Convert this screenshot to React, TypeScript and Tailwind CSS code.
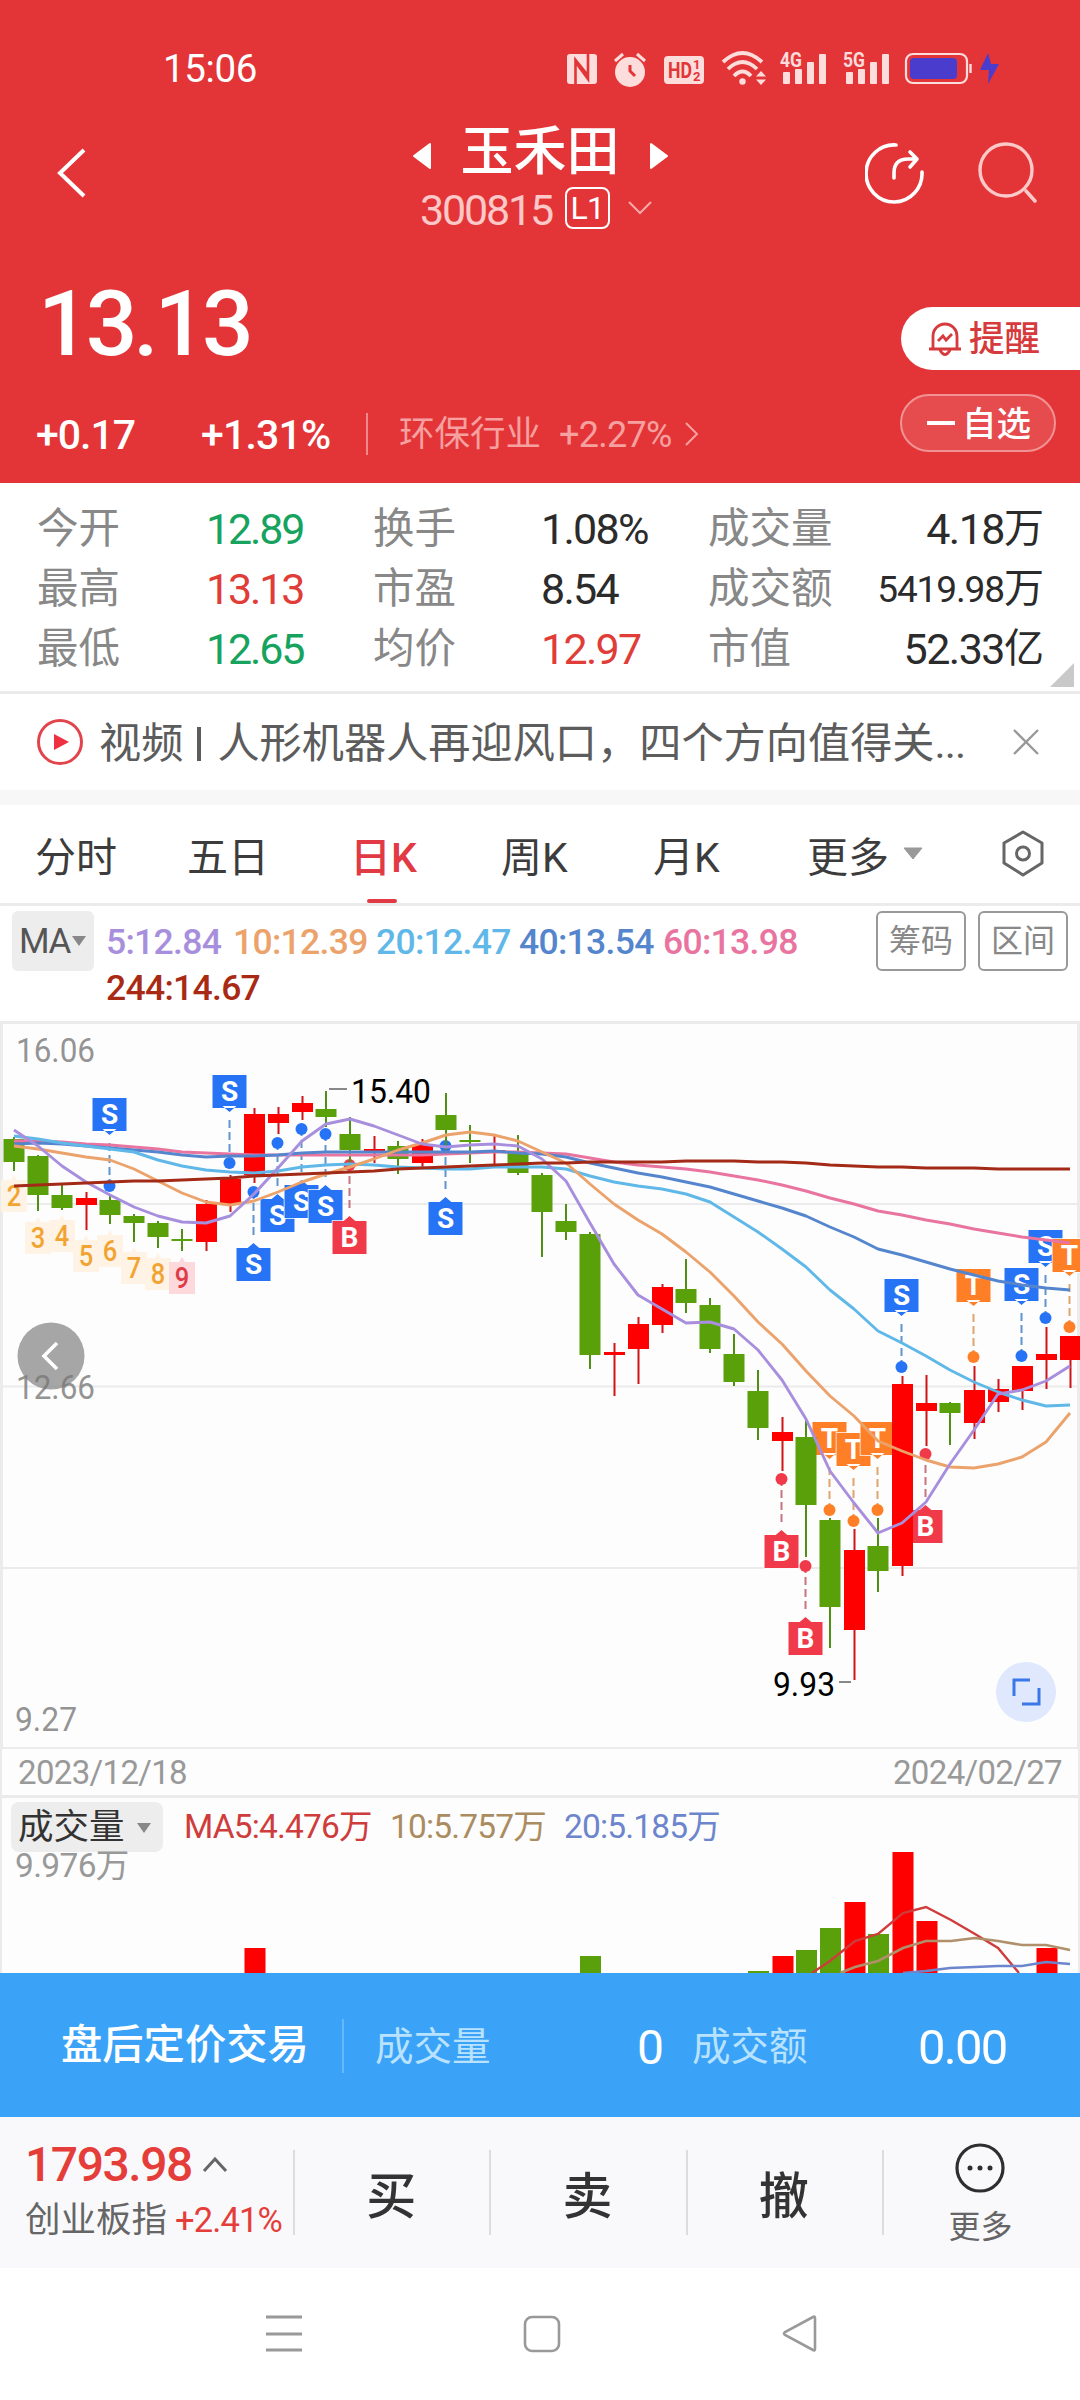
import type { ReactNode } from "react"

type Candle = [up: number, top: number, bottom: number, high: number, low: number]
type Marker = { i: number; kind: "S" | "B" | "T"; dot: number; below?: boolean }

const STEP = 24
const colX = (i: number) => 14 + i * STEP

// up/down, body top, body bottom, wick top, wick bottom
const candles: Candle[] = [
  [0, 119, 142, 117, 151], [0, 136, 175, 135, 191], [0, 175, 188, 163, 190], [1, 178, 185, 172, 210],
  [0, 180, 195, 175, 204], [0, 196, 203, 194, 222], [0, 203, 217, 201, 228], [0, 219, 221, 209, 231],
  [1, 184, 222, 180, 231], [1, 159, 184, 155, 192], [1, 94, 155, 88, 163], [1, 94, 103, 87, 114],
  [1, 83, 92, 76, 100], [0, 89, 97, 71, 107], [0, 114, 130, 97, 143], [1, 129, 131, 116, 143],
  [0, 126, 139, 121, 154], [1, 125, 143, 119, 147], [0, 95, 110, 73, 130], [0, 120, 122, 105, 143],
  [1, 130, 132, 114, 145], [0, 133, 153, 115, 155], [0, 155, 192, 153, 237], [0, 201, 212, 184, 220],
  [0, 214, 335, 212, 349], [1, 332, 335, 323, 376], [1, 304, 329, 297, 364], [1, 267, 305, 264, 313],
  [0, 269, 283, 239, 293], [0, 285, 329, 278, 333], [0, 334, 362, 314, 366], [0, 371, 408, 350, 420],
  [1, 412, 421, 397, 451], [0, 417, 485, 400, 537], [0, 500, 587, 498, 628], [1, 530, 610, 509, 660],
  [0, 526, 551, 498, 572], [1, 364, 546, 356, 556], [1, 383, 391, 355, 426], [0, 383, 393, 382, 425],
  [1, 370, 403, 346, 419], [1, 369, 382, 359, 392], [1, 346, 371, 346, 390], [1, 334, 340, 307, 369],
  [1, 316, 340, 316, 368],
]

const averages = [
  {
    color: "#e8749f",
    data: [121, 121, 122, 124, 125, 127, 129, 132, 133, 134, 135, 135, 135, 135, 135, 135, 135, 135, 134, 133, 132, 132, 133, 134, 138, 142, 145, 147, 149, 152, 156, 160, 165, 171, 178, 184, 191, 195, 200, 204, 209, 213, 217, 220, 223],
  },
  {
    color: "#5585cd",
    data: [124, 123, 124, 126, 128, 130, 132, 135, 137, 136, 136, 135, 133, 132, 132, 132, 132, 132, 132, 132, 131, 133, 134, 137, 143, 148, 153, 157, 162, 167, 174, 181, 188, 196, 207, 217, 229, 235, 242, 249, 255, 261, 265, 268, 270],
  },
  {
    color: "#5fb8e8",
    data: [116, 119, 123, 126, 129, 132, 140, 146, 150, 152, 153, 151, 147, 145, 144, 145, 147, 148, 149, 149, 147, 147, 147, 149, 156, 162, 166, 169, 174, 182, 197, 212, 229, 247, 270, 289, 311, 323, 336, 350, 362, 372, 380, 386, 385],
  },
  {
    color: "#eba26b",
    data: [126, 129, 133, 137, 140, 149, 161, 173, 182, 185, 181, 172, 162, 154, 147, 139, 130, 123, 115, 112, 115, 121, 132, 143, 164, 184, 200, 214, 232, 252, 276, 302, 324, 351, 376, 396, 421, 431, 440, 447, 448, 444, 437, 422, 393],
  },
  {
    color: "#a88fdd",
    data: [110, 126, 146, 162, 175, 187, 196, 202, 203, 196, 174, 148, 121, 104, 99, 106, 115, 124, 127, 125, 124, 126, 139, 161, 203, 244, 275, 289, 303, 302, 309, 330, 360, 399, 451, 483, 513, 503, 482, 444, 410, 374, 370, 361, 346],
  },
  {
    color: "#a32a16",
    data: [166, 165, 164, 163, 162, 161, 161, 160, 159, 158, 156, 155, 154, 153, 152, 151, 149, 148, 147, 146, 145, 144, 143, 143, 142, 142, 142, 142, 141, 141, 141, 142, 142, 143, 145, 146, 147, 147, 148, 148, 148, 149, 149, 149, 149],
  },
]

const markers: Marker[] = [
  { i: 4, kind: "S", dot: 166 },
  { i: 9, kind: "S", dot: 143 },
  { i: 10, kind: "S", dot: 172, below: true },
  { i: 11, kind: "S", dot: 123, below: true },
  { i: 12, kind: "S", dot: 109, below: true },
  { i: 13, kind: "S", dot: 114, below: true },
  { i: 14, kind: "B", dot: 145, below: true },
  { i: 18, kind: "S", dot: 126, below: true },
  { i: 32, kind: "B", dot: 459, below: true },
  { i: 33, kind: "B", dot: 546, below: true },
  { i: 34, kind: "T", dot: 490 },
  { i: 35, kind: "T", dot: 501 },
  { i: 36, kind: "T", dot: 490 },
  { i: 37, kind: "S", dot: 347 },
  { i: 38, kind: "B", dot: 434, below: true },
  { i: 40, kind: "T", dot: 337 },
  { i: 42, kind: "S", dot: 336 },
  { i: 43, kind: "S", dot: 298 },
  { i: 44, kind: "T", dot: 307 },
]

const markerColor = { S: "#2674f5", B: "#f03a4a", T: "#ff7f27" }
const stemColor = { S: "#5f95cf", B: "#c77580", T: "#dfa46f" }

// TD sequence count under each candle
const counts = [160, 202, 200, 220, 215, 232, 238, 242]

const volumes = [
  [10, 1, 151], [24, 0, 159], [31, 0, 174], [32, 1, 159], [33, 0, 153], [34, 0, 131],
  [35, 1, 105], [36, 0, 137], [37, 1, 55], [38, 1, 124], [43, 1, 151],
]

const stats = [
  [["今开", "12.89", "text-[#15a35e]"], ["换手", "1.08%", "text-[#2b2b2b]"], ["成交量", "4.18", "万"]],
  [["最高", "13.13", "text-[#e03c38]"], ["市盈", "8.54", "text-[#2b2b2b]"], ["成交额", "5419.98", "万"]],
  [["最低", "12.65", "text-[#15a35e]"], ["均价", "12.97", "text-[#e03c38]"], ["市值", "52.33", "亿"]],
]

function StatusIcons() {
  const pink = "#fddcdc"
  return (
    <svg width="440" height="44" viewBox="564 48 440 44" fill="none">
      <rect x="567" y="54" width="30" height="30" rx="3" fill={pink} />
      <path d="M575.500 84V60L588.500 76M588 54V79L575.500 62" stroke="#e33537" strokeWidth="2.600" />
      <circle cx="630" cy="72" r="15" fill={pink} />
      <path d="M615 61L623 54M645 61L637 54" stroke={pink} strokeWidth="3" />
      <path d="M630 65V71L635 76" stroke="#e33537" strokeWidth="3" />
      <rect x="664" y="56" width="40" height="28" rx="4" fill={pink} />
      <text x="668" y="78" fontSize="22" fontWeight="700" fill="#e33537" fontFamily="Roboto" textLength="24" lengthAdjust="spacingAndGlyphs">HD</text>
      <text x="693" y="69" fontSize="13" fontWeight="700" fill="#e33537" fontFamily="Roboto">1</text>
      <text x="693" y="81" fontSize="13" fontWeight="700" fill="#e33537" fontFamily="Roboto">2</text>
      <path d="M723 62Q742.500 44 762 62M728 69Q742.500 55 757 69M734 76Q742.500 67 751 76" stroke={pink} strokeWidth="3.800" />
      <circle cx="742.500" cy="81.500" r="3.200" fill={pink} />
      <path d="M761 71L766 76.500H756ZM761 85L756 79.500H766Z" fill={pink} />
      {[["4G", 783], ["5G", 846]].map(([label, x]) => (
        <g key={label} fill={pink}>
          <text x={Number(x) - 3} y="67" fontSize="21" fontWeight="700" fontFamily="Roboto" textLength="22" lengthAdjust="spacingAndGlyphs">{label}</text>
          <rect x={x} y="72" width="7" height="12" rx="1" />
          <rect x={Number(x) + 12} y="69" width="7" height="15" rx="1" />
          <rect x={Number(x) + 24} y="62" width="7" height="22" rx="1" />
          <rect x={Number(x) + 36} y="54" width="7" height="30" rx="1" />
        </g>
      ))}
      <rect x="906" y="54" width="61" height="29" rx="7" stroke={pink} strokeWidth="2.200" />
      <path d="M970.500 64V73" stroke={pink} strokeWidth="2.400" />
      <rect x="910" y="58" width="47" height="21" rx="4" fill="#4a3ccd" />
      <path d="M988 53L980 70H989L988 84L999 64H991Z" fill="#4a3ccd" />
    </svg>
  )
}

function Header() {
  return (
    <header className="h-[483px] bg-[#e33537] text-white">
      <div className="flex h-[92px] items-end">
        <span className="ml-[163px] w-[401px] text-[38.500px] leading-[46px] tracking-[-0.01em]">15:06</span>
        <StatusIcons />
      </div>

      <div className="flex h-[160px] pt-[28px]">
        <svg className="mt-[26px] ml-[56px]" width="32" height="54" fill="none">
          <path d="M28 4L4 27L28 50" stroke="white" strokeWidth="4" />
        </svg>
        <div className="ml-[312px] flex w-[280px] flex-col items-center">
          <div className="flex h-[60px] items-center">
            <svg width="20" height="28" className="mt-[12px]"><path d="M18 2V26L2 14Z" fill="white" stroke="white" strokeWidth="2" strokeLinejoin="round" /></svg>
            <span className="mx-[29px] pt-[4px] text-[53px] leading-[60px] font-medium">玉禾田</span>
            <svg width="20" height="28" className="mt-[12px]"><path d="M2 2V26L18 14Z" fill="white" stroke="white" strokeWidth="2" strokeLinejoin="round" /></svg>
          </div>
          <div className="flex h-[56px] w-full items-center pl-[20px]">
            <span className="w-[145px] pt-[4px] text-[43px] tracking-[-0.05em] text-[#fcc8c8]">300815</span>
            <span className="h-[42px] w-[45px] rounded-lg border-2 border-white text-center text-[32px] leading-[38px] tracking-[-0.02em]">L1</span>
            <svg className="ml-[17px]" width="26" height="16" fill="none"><path d="M2 2L13 13L24 2" stroke="#f7a9a9" strokeWidth="2" /></svg>
          </div>
        </div>
        <svg className="mt-[20px] ml-[185px]" width="62" height="66" fill="none">
          <path d="M32 6A28 28.500 0 1 0 58 33" stroke="white" strokeWidth="3.600" strokeLinecap="round" transform="translate(-1 -1)" />
          <path d="M29 38V33Q29 19 43 19H51M45 12L52 19L45 27" stroke="white" strokeWidth="3.600" strokeLinecap="round" strokeLinejoin="round" />
        </svg>
        <svg className="mt-[20px] ml-[50px]" width="64" height="66" fill="none">
          <circle cx="29" cy="30" r="26" stroke="#fcc8c8" strokeWidth="3.400" />
          <path d="M49 51L58 61" stroke="#fcc8c8" strokeWidth="3.600" strokeLinecap="round" />
        </svg>
      </div>

      <div className="flex h-[142px] justify-between">
        <span className="mt-[18px] ml-[38px] text-[91px] leading-[108px] font-medium tracking-[-0.045em]">13.13</span>
        <div className="mt-[55px] flex h-[63px] w-[179px] items-center rounded-l-full bg-white pl-[27px] text-[#d63a3c]">
          <svg width="34" height="36" fill="none" stroke="#d63a3c" strokeWidth="2.800">
            <path d="M5 28V15A12 12 0 0 1 29 15V28M1 28H33M12 29Q17 38 22 29" />
            <path d="M10 20L15 15L18 19L24 13" />
          </svg>
          <span className="ml-[7px] pt-[3px] text-[35.500px] font-medium">提醒</span>
        </div>
      </div>

      <div className="flex h-[58px]">
        <div className="flex h-[80px] items-center">
          <span className="ml-[36px] w-[165px] pt-[2px] text-[41px] font-medium tracking-[-0.025em]">+0.17</span>
          <span className="w-[165px] pt-[2px] text-[41px] font-medium tracking-[-0.02em]">+1.31%</span>
          <span className="h-[42px] w-[2px] bg-[#ef8a8b]" />
          <span className="ml-[31px] pt-[2px] text-[35.500px] text-[#f6a0a0]">环保行业</span>
          <span className="ml-[18px] w-[125px] pt-[2px] text-[36px] tracking-[-0.02em] text-[#f6a0a0]">+2.27%</span>
          <svg width="16" height="28" fill="none"><path d="M2 3L13 14L2 25" stroke="#f6a0a0" strokeWidth="2" /></svg>
        </div>
        <div className="mr-[24px] ml-auto flex h-[58px] w-[156px] items-center rounded-full border-2 border-[#f19394] bg-[#e64b4d] pl-[25px]">
          <span className="h-[4px] w-[28px] bg-white" />
          <span className="ml-[7px] pt-[3px] text-[34.500px] font-medium">自选</span>
        </div>
      </div>
    </header>
  )
}

function Stats() {
  return (
    <section className="relative h-[211px] border-b-[3px] border-[#ebebeb] pt-[16px]">
      {stats.map((row) => (
        <div key={row[0][0]} className="flex h-[60px] items-center pl-[37px] text-[41.500px] text-[#888]">
          <span className="w-[169px]">{row[0][0]}</span>
          <span className={`w-[167px] text-[43px] tracking-[-0.05em] ${row[0][2]}`}>{row[0][1]}</span>
          <span className="w-[168px]">{row[1][0]}</span>
          <span className={`w-[167px] text-[43px] tracking-[-0.04em] ${row[1][2]}`}>{row[1][1]}</span>
          <span className="w-[130px]">{row[2][0]}</span>
          <span className="flex w-[206px] items-center justify-end text-[#2b2b2b]">
            <span className={row[2][1].length > 6 ? "text-[37px] tracking-[-0.03em]" : "text-[43px] tracking-[-0.035em]"}>{row[2][1]}</span>
            <span className="text-[40px]">{row[2][2]}</span>
          </span>
        </div>
      ))}
      <svg className="absolute right-[6px] bottom-[4px]" width="24" height="24"><path d="M24 0V24H0Z" fill="#c9c9c9" /></svg>
    </section>
  )
}

function News() {
  return (
    <div className="flex h-[96px] items-center">
      <svg className="ml-[36px]" width="48" height="48" fill="none">
        <circle cx="24" cy="24" r="21.500" stroke="#e2444c" strokeWidth="3" />
        <path d="M18 16L33 24L18 32Z" fill="#ee3040" />
      </svg>
      <p className="ml-[15px] flex items-center pt-[4px] text-[42.200px] text-[#5c5c5c]">
        视频<span className="mr-[16px] ml-[14px] h-[34px] w-[4px] bg-[#5c5c5c]" />人形机器人再迎风口，四个方向值得关
        <span className="tracking-[-0.02em]">...</span>
      </p>
      <svg className="mr-[40px] ml-auto" width="28" height="28"><path d="M2 2L26 26M26 2L2 26" stroke="#999" strokeWidth="2.400" /></svg>
    </div>
  )
}

function Tab({ children, className }: { children: ReactNode; className: string }) {
  return <span className={`pt-[8px] text-[41px] ${className}`}>{children}</span>
}

function Tabs() {
  return (
    <nav className="flex h-[101px] items-center border-b-[3px] border-[#ebebeb] text-[#3c3c3c]">
      <Tab className="ml-[35px] w-[152px]">分时</Tab>
      <Tab className="w-[163px]">五日</Tab>
      <div className="relative flex h-full w-[151px] items-center text-[#e23a44]">
        <Tab className="font-medium">日K</Tab>
        <span className="absolute bottom-0 left-[17px] h-[4px] w-[30px] rounded-full bg-[#e23a44]" />
      </div>
      <Tab className="w-[152px]">周K</Tab>
      <Tab className="w-[154px]">月K</Tab>
      <Tab className="w-[95px]">更多</Tab>
      <svg width="22" height="14"><path d="M2 1H20L11 12Z" fill="#999" stroke="#999" strokeLinejoin="round" /></svg>
      <svg className="ml-[76px]" width="46" height="50" fill="none" stroke="#666" strokeWidth="3">
        <path d="M23 3L42 14V34L23 46L4 34V14Z" strokeLinejoin="round" />
        <circle cx="23" cy="24.500" r="6.500" />
      </svg>
    </nav>
  )
}

function Legend() {
  return (
    <div className="flex h-[115px] items-start pt-[5px] pl-[12px]">
      <div className="flex h-[60px] w-[82px] items-center rounded-md bg-[#ededed] pl-[7px] text-[35px] tracking-[-0.04em] text-[#555]">
        MA
        <svg className="ml-[2px]" width="14" height="10"><path d="M0 0H14L7 10Z" fill="#888" /></svg>
      </div>
      <div className="ml-[12px] w-[770px] pt-[8px] text-[35.500px] leading-[46px] font-medium tracking-[-0.02em]">
        <div className="flex">
          <span className="w-[127px] text-[#a88fdd]">5:12.84</span>
          <span className="w-[143px] text-[#eba26b]">10:12.39</span>
          <span className="w-[143px] text-[#5fb8e8]">20:12.47</span>
          <span className="w-[144px] text-[#5585cd]">40:13.54</span>
          <span className="text-[#e8749f]">60:13.98</span>
        </div>
        <div className="text-[#a92a14]">244:14.67</div>
      </div>
      <button className="h-[60px] w-[90px] rounded-md border-2 border-[#999] text-[32px] leading-[54px] text-[#888]">筹码</button>
      <button className="ml-[12px] h-[60px] w-[90px] rounded-md border-2 border-[#999] text-[32px] leading-[54px] text-[#888]">区间</button>
    </div>
  )
}

function Flag({ i, kind, dot, below }: Marker) {
  const x = colX(i) - 0.5
  const dir = below ? 1 : -1
  const top = below ? dot + 56 : dot - 88
  const tip = dot + dir * 51
  const base = dot + dir * 57
  return (
    <g>
      <path d={`M${x} ${tip - dir * 8}V${dot}`} stroke={stemColor[kind]} strokeWidth="2" strokeDasharray="8 4" />
      <circle cx={x} cy={dot} r="6" fill={markerColor[kind]} />
      <path
        d={`M${x - 17} ${top}h34v33h-34ZM${x - 7} ${base}L${x} ${tip}L${x + 7} ${base}Z`}
        fill={markerColor[kind]}
        stroke="white"
        strokeWidth="1.500"
        paintOrder="stroke"
      />
      <text x={x} y={top + 26} fontSize="28" fontWeight="700" fill="white" textAnchor="middle" fontFamily="Roboto">{kind}</text>
    </g>
  )
}

function PriceChart() {
  return (
    <svg className="block" width="1080" height="728" viewBox="0 1 1080 728" fill="none" fontFamily="Roboto">
      <rect x="1.500" y="2.500" width="1077" height="726" fill="#fdfdfd" stroke="#ebebeb" strokeWidth="3" />
      <path d="M0 184H1080M0 366.500H1080M0 548H1080" stroke="#ebebeb" strokeWidth="2" />

      {counts.map((y, i) => (
        <g key={i}>
          <path d={`M${colX(i) - 13} ${y}h10l3 -5l3 5h10v32h-26Z`} fill={i === 7 ? "#fdd9dc" : "#fff3e6"} />
          <text x={colX(i)} y={y + 26} fontSize="29" fontWeight="500" textAnchor="middle" fill={i === 7 ? "#df3b48" : "#f2a433"} textLength="14.500" lengthAdjust="spacingAndGlyphs">{i + 2}</text>
        </g>
      ))}
      {markers.map((m) => <Flag key={m.i} {...m} />)}

      {candles.map(([up, top, bottom, high, low], i) => (
        <g key={i} fill={up ? "#ff0000" : "#5aa00a"}>
          <rect x={colX(i) - 1 + up * 0.5} y={high} width="2" height={low - high} fill={up ? "#cf1417" : "#4e8f14"} />
          <rect x={colX(i) - 10.5 + up * 0.5} y={top} width="21" height={bottom - top} />
        </g>
      ))}

      {averages.map((ma) => (
        <polyline key={ma.color} points={ma.data.map((y, i) => `${colX(i)},${y}`).join(" ")} stroke={ma.color} strokeWidth="2.900" strokeLinejoin="round" />
      ))}

      <path d="M329 69H347M839 662H851" stroke="#888" strokeWidth="2" />
      <text x="351" y="83" fontSize="33" fill="#000" textLength="80" lengthAdjust="spacingAndGlyphs">15.40</text>
      <text x="773" y="676" fontSize="33" fill="#000" textLength="62" lengthAdjust="spacingAndGlyphs">9.93</text>

      <circle cx="51" cy="336" r="33.500" fill="#888" fillOpacity="0.750" />
      <path d="M57 323L44 336L57 349" stroke="white" strokeWidth="3.600" />
      <g fill="#777" fillOpacity="0.800" fontSize="33">
        <text x="16" y="42" textLength="79" lengthAdjust="spacingAndGlyphs">16.06</text>
        <text x="16" y="379" textLength="79" lengthAdjust="spacingAndGlyphs">12.66</text>
        <text x="15" y="711" textLength="62" lengthAdjust="spacingAndGlyphs">9.27</text>
      </g>

      <circle cx="1026" cy="672" r="30" fill="#dfe8fd" />
      <path d="M1014 676V660H1030M1022 684H1039V668" stroke="#3b78e7" strokeWidth="3" />
    </svg>
  )
}

function VolumePanel() {
  return (
    <section className="relative h-[175px] overflow-hidden border-x-2 border-[#ebebeb] bg-[#fdfdfd]">
      <svg className="absolute top-0 left-[-2px]" width="1080" height="175" fill="none">
        {volumes.map(([i, up, y]) => (
          <rect key={i} x={colX(i) - 10 + up * 0.5} y={y - 1} width="21" height={176 - y} fill={up ? "#ff0000" : "#5aa00a"} />
        ))}
        <polyline points="812,175 830,163 855,143 878,136 903,115 926,109 951,122 975,136 998,150 1019,175" stroke="#cf3c3c" strokeWidth="2.400" />
        <polyline points="840,175 855,169 878,163 903,150 926,143 951,143 975,140 998,143 1022,147 1046,147 1070,152" stroke="#b0906a" strokeWidth="2.600" />
        <polyline points="903,175 926,173 950,170 975,169 998,168 1022,168 1046,164 1070,166" stroke="#6d85cd" strokeWidth="2.600" />
      </svg>
      <div className="relative flex h-[54px] items-end pl-[9px]">
        <div className="flex h-[50px] w-[152px] items-center rounded-lg bg-[#ededed] pt-[2px] pl-[7px] text-[35.500px] text-[#333]">
          成交量
          <svg className="ml-[12px]" width="14" height="10"><path d="M0 0H14L7 10Z" fill="#888" /></svg>
        </div>
        <div className="flex h-[50px] items-center pl-[21px] text-[33.500px] tracking-[-0.025em]">
          <span className="w-[206px] text-[#cf3c3c]">MA5:4.476万</span>
          <span className="w-[174px] text-[#ab8c60]">10:5.757万</span>
          <span className="text-[#6d85cd]">20:5.185万</span>
        </div>
      </div>
      <div className="relative pt-[1px] pl-[13px] text-[33.500px] leading-[26px] tracking-[-0.02em] text-[#999]">9.976万</div>
    </section>
  )
}

function TradeBar() {
  return (
    <footer>
      <div className="flex h-[144px] items-center bg-[#3aa3f8] pt-[2px] text-[38.500px] text-[#b9e2ff]">
        <span className="ml-[61px] w-[281px] text-[41.300px] font-medium text-white">盘后定价交易</span>
        <span className="h-[54px] w-[2px] bg-[#65b8fa]" />
        <span className="ml-[31px] w-[262px] pt-[3px]">成交量</span>
        <span className="w-[55px] pt-[3px] text-[48px] text-white">0</span>
        <span className="w-[226px] pt-[3px]">成交额</span>
        <span className="pt-[3px] text-[49px] tracking-[-0.035em] text-white">0.00</span>
      </div>

      <div className="flex h-[151px] items-center bg-[#f9f9fc] text-[#333]">
        <div className="w-[293px] pt-[2px] pl-[25px] whitespace-nowrap">
          <div className="flex h-[54px] items-center text-[48px] font-medium tracking-[-0.03em] text-[#e53e3a]">
            1793.98
            <svg className="ml-[10px]" width="26" height="16" fill="none"><path d="M2 14L13 2L24 14" stroke="#666" strokeWidth="3" /></svg>
          </div>
          <div className="flex h-[58px] items-center text-[35.500px] text-[#666]">
            创业板指
            <span className="ml-[8px] text-[34.500px] tracking-[-0.025em] text-[#e53e3a]">+2.41%</span>
          </div>
        </div>
        {["买", "卖", "撤"].map((label) => (
          <div key={label} className="flex h-[85px] w-[196.300px] items-center justify-center border-l-2 border-[#dcdcde] pt-[8px] pr-[2px] text-[50px] font-medium">
            {label}
          </div>
        ))}
        <div className="flex h-[85px] flex-1 items-center justify-center border-l-2 border-[#dcdcde] pr-[3px]">
          <div className="flex shrink-0 flex-col items-center pt-[8px]">
            <svg className="shrink-0" width="50" height="50" fill="none">
              <circle cx="25" cy="25" r="23" stroke="#2e2e2e" strokeWidth="3.200" />
              <circle cx="15" cy="25" r="2.500" fill="#2e2e2e" />
              <circle cx="25" cy="25" r="2.500" fill="#2e2e2e" />
              <circle cx="35" cy="25" r="2.500" fill="#2e2e2e" />
            </svg>
            <span className="mt-[10px] text-[32px] leading-[48px] text-[#666]">更多</span>
          </div>
        </div>
      </div>
    </footer>
  )
}

function SystemNav() {
  return (
    <div className="flex h-[132px] items-center justify-between pr-[261px] pl-[265px]">
      <svg width="38" height="38"><path d="M1 2H37M1 19H37M1 35H37" stroke="#999" strokeWidth="3" /></svg>
      <svg width="38" height="38" fill="none"><rect x="2" y="2" width="34" height="34" rx="7" stroke="#999" strokeWidth="2.600" /></svg>
      <svg width="38" height="38" fill="none"><path d="M34 3V34Q34 36 32 35L4 20Q2 18.500 4 17L32 2Q34 1 34 3Z" stroke="#999" strokeWidth="2.600" /></svg>
    </div>
  )
}

export default function App() {
  return (
    <div className="flex h-[2400px] w-[1080px] flex-col overflow-hidden bg-white font-[Roboto,'Noto_Sans_CJK_SC',sans-serif] leading-none">
      <Header />
      <Stats />
      <News />
      <div className="h-[15px] bg-[#f7f7f7]" />
      <Tabs />
      <Legend />
      <PriceChart />
      <div className="flex h-[49px] items-center justify-between border-x-2 border-b-[3px] border-[#ebebeb] bg-[#fdfdfd] px-[16px] text-[33px] tracking-[-0.02em] text-[#999]">
        <span>2023/12/18</span>
        <span>2024/02/27</span>
      </div>
      <VolumePanel />
      <TradeBar />
      <SystemNav />
    </div>
  )
}
